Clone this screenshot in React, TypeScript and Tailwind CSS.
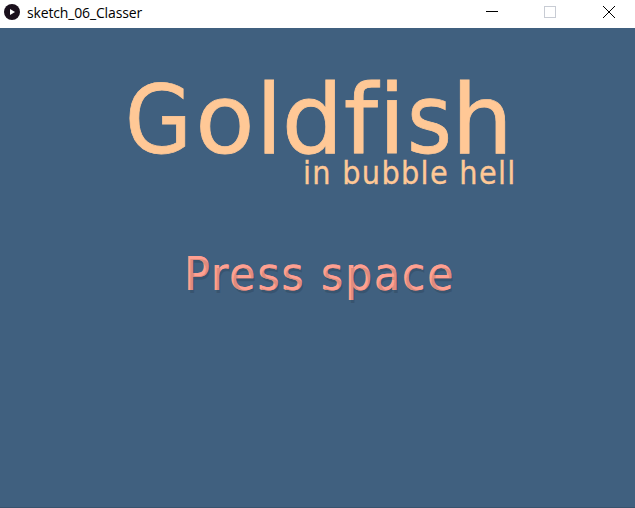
export default function App() {
  return (
    <div className="flex h-[508px] w-[635px] flex-col overflow-hidden bg-[#40607f]">
      <header className="flex h-7 shrink-0 items-center bg-white">
        <svg className="-mt-1 ml-1 h-4 w-4" viewBox="0 0 16 16">
          <circle cx="8" cy="8" r="8" fill="#1a101c" />
          <path d="M6 5l5 3-5 3z" fill="#fff" />
        </svg>
        <span className="-mt-[3px] ml-[7px] font-['Open_Sans',sans-serif] text-[14px] leading-5 tracking-[-0.15px] text-black">
          sketch_06_Classer
        </span>
        <svg className="-mt-1 ml-auto mr-[19px] h-3 w-[131px]" viewBox="0 0 131 12" fill="none" shapeRendering="crispEdges">
          <path d="M1 5.5h12" stroke="#000" />
          <rect x="59.5" y=".5" width="11" height="11" stroke="#c8ccd4" />
          <path d="M118 0l12 12M130 0l-12 12" stroke="#000" shapeRendering="auto" />
        </svg>
      </header>
      <main className="flex grow flex-col whitespace-nowrap border-b border-[#38536d] font-['DejaVu_Sans',sans-serif] text-[#ffc896] [font-variant-ligatures:none]">
        <h1 className="ml-[125px] mt-[52px] h-[78px] text-[97px] leading-[79px] tracking-[-0.9px] [-webkit-text-stroke:0.8px_#ffc896]">
          <span className="-mr-[4px] inline-block origin-[0_85%] scale-x-[0.89] scale-y-[0.97]">G</span>
          <span className="tracking-[1px]">o</span>
          <span>l</span>
          <span className="tracking-[0.5px]">df</span>
          <span className="tracking-[1.5px]">i</span>
          <span className="-mr-[5px] inline-block origin-left scale-x-[0.89]">s</span>
          <span>h</span>
        </h1>
        <p className="ml-[303px] h-[32px] font-['DejaVu_Sans_Condensed','DejaVu_Sans',sans-serif] text-[32px] leading-[30px] tracking-[1.3px] [font-stretch:condensed] [-webkit-text-stroke:0.3px_#ffc896]">
          in bubble hell
        </p>
        <p className="ml-[186px] mt-[62px] h-[50px] font-['DejaVu_Sans_Condensed','DejaVu_Sans',sans-serif] text-[47px] leading-[50px] tracking-[2.05px] text-black/12 [font-stretch:condensed] [text-shadow:-2px_-3px_#ffa091,-1.5px_-3px_#ffa091]">
          Press space
        </p>
      </main>
    </div>
  );
}
